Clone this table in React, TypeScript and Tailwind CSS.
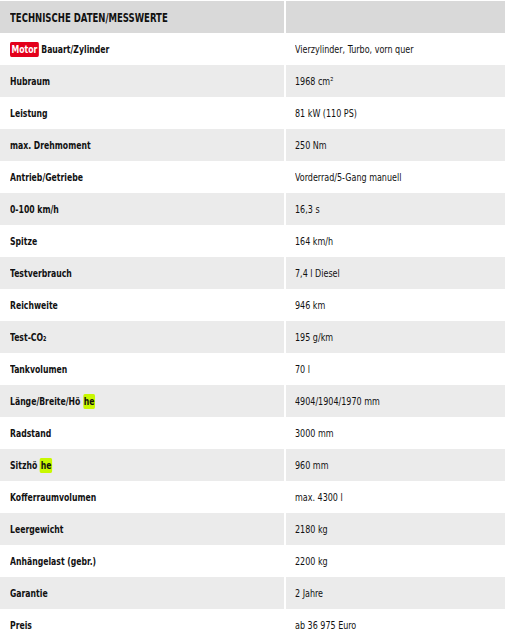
import React from 'react';

type Row = { label: React.ReactNode; value: React.ReactNode };

const Hl: React.FC<{ children: React.ReactNode }> = ({ children }) => (
  <span className="rounded-[2px] bg-[#c8f800] px-[1px] py-[1px]">{children}</span>
);

const rows: Row[] = [
  {
    label: (
      <>
        <span className="mr-[3px] rounded-[2px] bg-[#e3001b] px-[2px] py-[1px] text-white">Motor</span>
        Bauart/Zylinder
      </>
    ),
    value: 'Vierzylinder, Turbo, vorn quer',
  },
  { label: 'Hubraum', value: '1968 cm²' },
  { label: 'Leistung', value: '81 kW (110 PS)' },
  { label: 'max. Drehmoment', value: '250 Nm' },
  { label: 'Antrieb/Getriebe', value: 'Vorderrad/5-Gang manuell' },
  { label: '0-100 km/h', value: '16,3 s' },
  { label: 'Spitze', value: '164 km/h' },
  { label: 'Testverbrauch', value: '7,4 l Diesel' },
  { label: 'Reichweite', value: '946 km' },
  { label: 'Test-CO₂', value: '195 g/km' },
  { label: 'Tankvolumen', value: '70 l' },
  {
    label: (
      <>
        Länge/Breite/Hö <Hl>he</Hl>
      </>
    ),
    value: '4904/1904/1970 mm',
  },
  { label: 'Radstand', value: '3000 mm' },
  {
    label: (
      <>
        Sitzhö <Hl>he</Hl>
      </>
    ),
    value: '960 mm',
  },
  { label: 'Kofferraumvolumen', value: 'max. 4300 l' },
  { label: 'Leergewicht', value: '2180 kg' },
  { label: 'Anhängelast (gebr.)', value: '2200 kg' },
  { label: 'Garantie', value: '2 Jahre' },
  { label: 'Preis', value: 'ab 36 975 Euro' },
];

const App: React.FC = () => {
  return (
    <div
      className="h-[640px] w-[508px] overflow-hidden bg-white pt-px text-[#111]"
      style={{ fontFamily: '"DejaVu Sans Condensed", "DejaVu Sans", sans-serif' }}
    >
      <div className="grid grid-cols-[284px_219px] gap-x-[2px]">
        <div className="flex h-[32px] items-center bg-[#d9d9d9] pl-[10px] pt-[2px] text-[12px] font-bold uppercase">
          <span className="inline-block origin-left scale-x-[0.79] whitespace-nowrap">Technische Daten/Messwerte</span>
        </div>
        <div className="h-[32px] bg-[#d9d9d9]" />
        {rows.map((row, i) => {
          const bg = i % 2 === 1 ? 'bg-[#ebebeb]' : 'bg-white';
          return (
            <React.Fragment key={i}>
              <div className={`flex h-[32px] items-center pl-[10px] pt-[2px] text-[11px] font-bold ${bg}`}>
                <span className="inline-block origin-left scale-x-[0.78] whitespace-nowrap">{row.label}</span>
              </div>
              <div className={`flex h-[32px] items-center pl-[9px] pt-[2px] text-[11px] ${bg}`}>
                <span className="inline-block origin-left scale-x-[0.81] whitespace-nowrap">{row.value}</span>
              </div>
            </React.Fragment>
          );
        })}
      </div>
    </div>
  );
};

export default App;
